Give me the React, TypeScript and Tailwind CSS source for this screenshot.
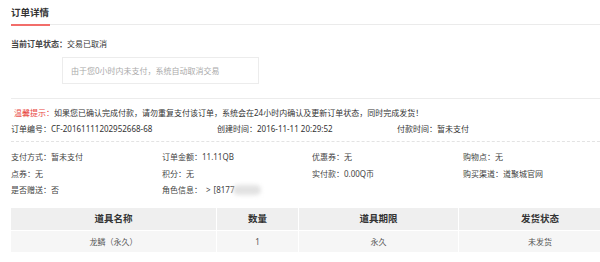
const infoRows: [string, string][][] = [
  [
    ['支付方式：', '暂未支付'],
    ['订单金额：', '11.11QB'],
    ['优惠券：', '无'],
    ['购物点：', '无'],
  ],
  [
    ['点券：', '无'],
    ['积分：', '无'],
    ['实付款：', '0.00Q币'],
    ['购买渠道：', '道聚城官网'],
  ],
];

export default function App() {
  return (
    <div
      className="w-[600px] h-[262px] overflow-hidden bg-white text-[8px] text-[#333]"
      style={{ fontFamily: '"Noto Sans", "Noto Sans CJK SC", sans-serif' }}
    >
      <div className="w-[620px] pl-[11px]">
        {/* Title bar */}
        <div className="flex h-[25px] border-b border-[#ebebeb]">
          <div className="h-[26px] border-b-2 border-[#f26d6a] pt-[4px] pb-[2px] pr-[1px] flex items-center text-[9.5px] font-bold text-[#333]">
            订单详情
          </div>
        </div>

        {/* Current status */}
        <div className="mt-[13px] leading-[12px]">
          <span className="font-bold text-[#444]">当前订单状态：</span>
          <span>交易已取消</span>
        </div>
        <div className="mt-[7px] ml-[51px] w-[197px] h-[27px] border border-[#ececec] pl-[8px] flex items-center text-[#aaa]">
          由于您0小时内未支付，系统自动取消交易
        </div>

        <div className="mt-[14px] border-t border-[#ececec]" />

        {/* Tip + order meta */}
        <div className="mt-[6px] pl-[3px] leading-[16px]">
          <span className="text-[#e8473f]">温馨提示：</span>
          如果您已确认完成付款，请勿重复支付该订单，系统会在24小时内确认及更新订单状态，同时完成发货！
        </div>
        <div className="grid grid-cols-[206px_180px_1fr] leading-[16px]">
          <span>订单编号：CF-20161111202952668-68</span>
          <span>创建时间：2016-11-11 20:29:52</span>
          <span>付款时间：暂未支付</span>
        </div>

        <div className="mt-[4px] border-t border-dashed border-[#e3e3e3]" />

        {/* Info grid */}
        <div className="mt-[7px] grid grid-cols-[151px_150px_151px_1fr] leading-[16.5px] text-[#444]">
          {infoRows.flat().map(([k, v]) => (
            <span key={k}>
              {k}
              {v}
            </span>
          ))}
          <span>是否赠送：否</span>
          <span className="flex items-center">
            角色信息：
            <span className="ml-[4px] mr-[3px]">&gt;</span>
            [8177
            <span className="inline-block w-[28px] h-[10px] -ml-[2px] rounded-full bg-[#e2e2e2] blur-[2px]" />
          </span>
        </div>

        {/* Items table */}
        <div className="mt-[9.5px] grid grid-cols-[205px_81px_159px_162px] gap-px bg-white text-center">
          {['道具名称', '数量', '道具期限', '发货状态'].map((h) => (
            <div
              key={h}
              className="h-[22px] flex items-center justify-center bg-[#efefef] text-[9.5px] font-bold text-[#333]"
            >
              {h}
            </div>
          ))}
          {['龙鳞（永久）', '1', '永久', '未发货'].map((c) => (
            <div
              key={c}
              className="h-[21px] flex items-center justify-center bg-[#f6f6f6] text-[#555]"
            >
              {c}
            </div>
          ))}
        </div>
      </div>
    </div>
  );
}
